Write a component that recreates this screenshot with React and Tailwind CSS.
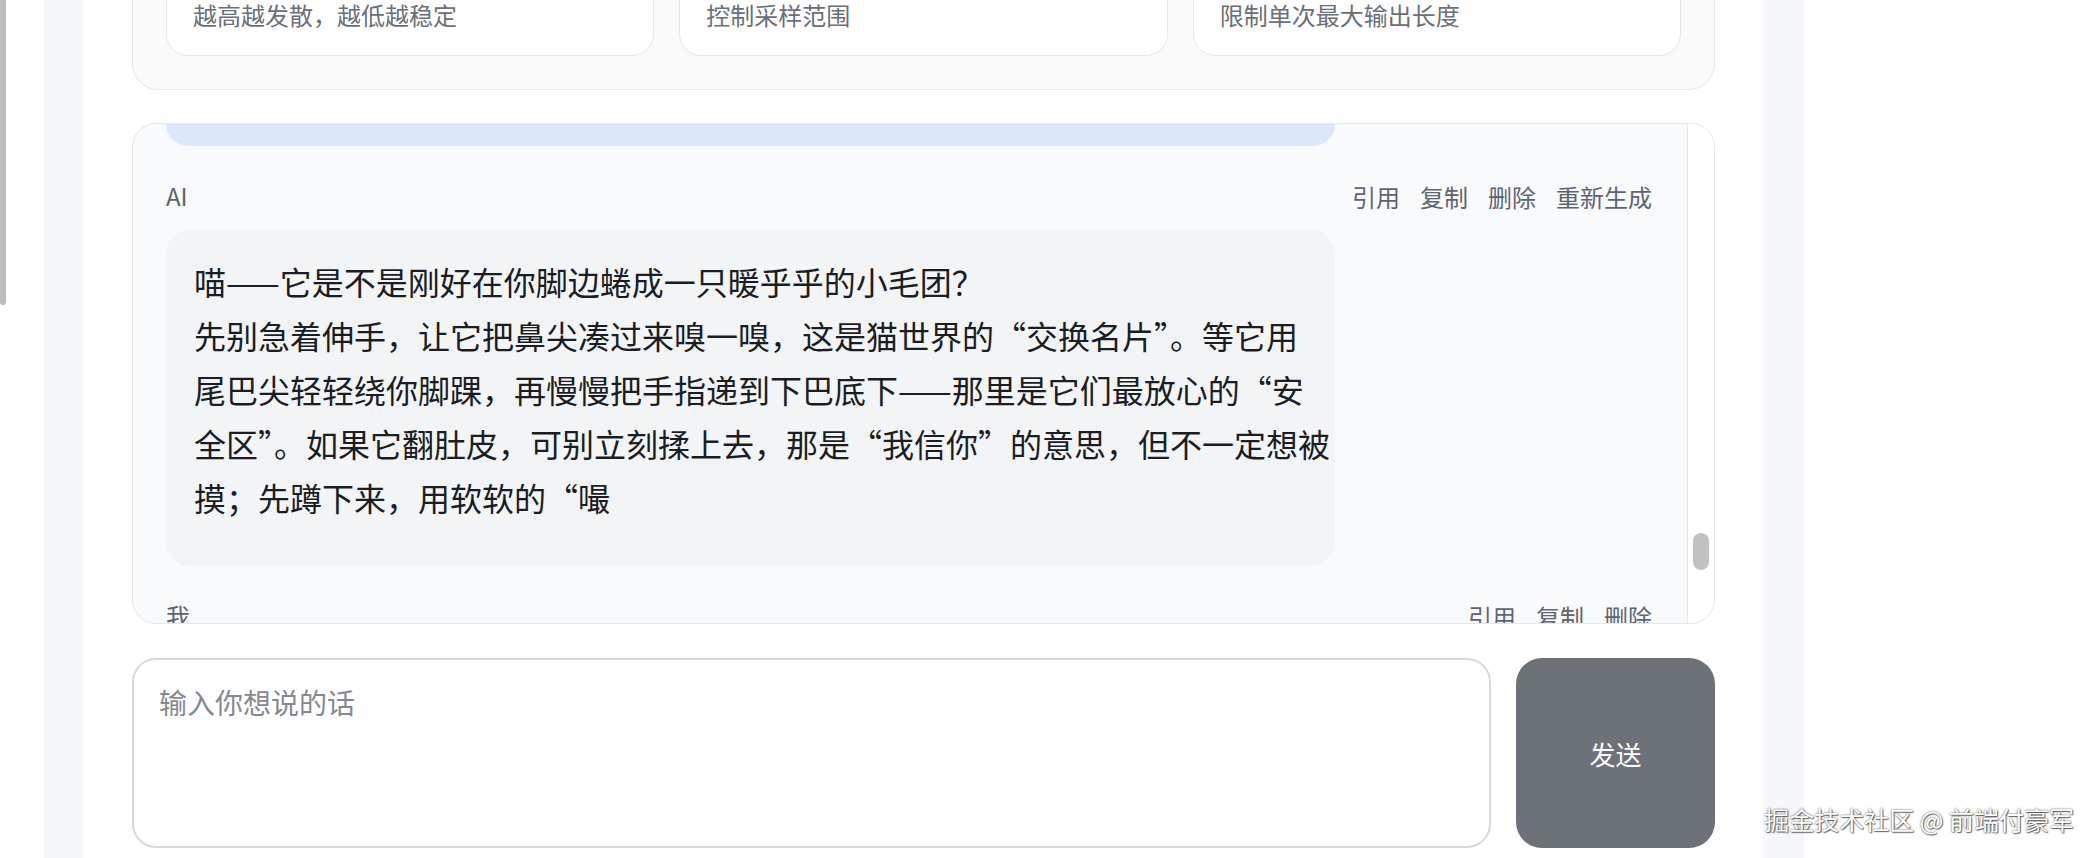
import React from "react";

const cards = ["越高越发散，越低越稳定", "控制采样范围", "限制单次最大输出长度"];

function Header({ label, actions }) {
  return (
    <div className="flex h-[36px] items-start justify-between">
      <span className="text-[24px] leading-[36px] text-[#5f6570]">{label}</span>
      <div className="flex gap-5 pr-[3px] pt-[1px] text-[24px] leading-[36px] text-[#5f6570]">
        {actions.map((a) => (
          <button key={a} className="cursor-pointer">
            {a}
          </button>
        ))}
      </div>
    </div>
  );
}

export default function App() {
  return (
    <div className="relative flex h-[858px] w-[2098px] overflow-hidden bg-white font-['Noto_Sans_CJK_SC',sans-serif]">
      <div className="w-[44px] shrink-0">
        <div className="h-[305px] w-[6px] rounded-b-[3px] bg-[#bdbdbd]" />
      </div>
      <div className="w-[39px] shrink-0 bg-[#f5f7fb]" />
      <main className="flex w-[1680px] shrink-0 flex-col justify-end pb-[10px] pl-[49px] pr-[48px]">
        {/* settings */}
        <section className="shrink-0 rounded-[26px] border border-[#e6e7ea] bg-[#fafafa] px-[33px] pb-[33px] pt-8">
          <div className="grid grid-cols-3 gap-[25px]">
            {cards.map((desc) => (
              <div
                key={desc}
                className="rounded-[22px] border border-[#e6e7ea] bg-white px-[26px] pb-[25px] pt-[140px]"
              >
                <div className="text-[24px] leading-[30px] text-[#6b6f76]">{desc}</div>
              </div>
            ))}
          </div>
        </section>

        {/* chat */}
        <section className="mt-[33px] flex h-[501px] shrink-0 overflow-hidden rounded-[24px] border border-[#e6e7ea] bg-[#f9fafb]">
          <div className="min-w-0 flex-1 overflow-hidden pl-[33px] pr-[32px]">
            <div className="-mt-[58px] h-[80px] w-[1169px] rounded-[22px] bg-[#dce7fb]" />

            <div className="mt-8">
              <Header label="AI" actions={["引用", "复制", "删除", "重新生成"]} />
              <div className="mt-4 w-[1169px] whitespace-nowrap rounded-[24px] bg-[#f2f4f6] px-[28px] pb-[42px] pt-6 text-[32px] leading-[54px] text-[#1a1d23]">
                喵——它是不是刚好在你脚边蜷成一只暖乎乎的小毛团？
                <br />
                先别急着伸手，让它把鼻尖凑过来嗅一嗅，这是猫世界的“交换名片”。等它用
                <br />
                尾巴尖轻轻绕你脚踝，再慢慢把手指递到下巴底下——那里是它们最放心的“安
                <br />
                全区”。如果它翻肚皮，可别立刻揉上去，那是“我信你”的意思，但不一定想被
                <br />
                摸；先蹲下来，用软软的“嘬
              </div>
            </div>

            <div className="mt-8">
              <Header label="我" actions={["引用", "复制", "删除"]} />
            </div>
          </div>
          <div className="w-[27px] shrink-0 border-l border-[#e6e7ea] bg-white">
            <div className="mx-auto mt-[409px] h-[37px] w-[16px] rounded-full bg-[#c1c1c1]" />
          </div>
        </section>

        {/* input */}
        <div className="mt-[34px] flex h-[190px] shrink-0 gap-[25px]">
          <textarea
            placeholder="输入你想说的话"
            className="h-full flex-1 resize-none rounded-[24px] border-2 border-[#d9d9d9] bg-white px-[25px] pt-[21px] text-[28px] leading-[42px] text-[#1f2937] outline-none placeholder:text-[#85898f]"
          />
          <button className="h-full w-[199px] shrink-0 rounded-[26px] bg-[#6d7178] text-[26px] text-white">
            发送
          </button>
        </div>
      </main>
      <div className="w-[41px] shrink-0 bg-[#f5f7fb]" />
      <div className="flex-1" />

      <div className="absolute bottom-[23px] right-[24px] text-[25px] leading-[32px] text-white [text-shadow:0_0_2px_rgba(0,0,0,0.75),1px_1px_1px_rgba(0,0,0,0.5)]">
        掘金技术社区 @ 前端付豪军
      </div>
    </div>
  );
}
